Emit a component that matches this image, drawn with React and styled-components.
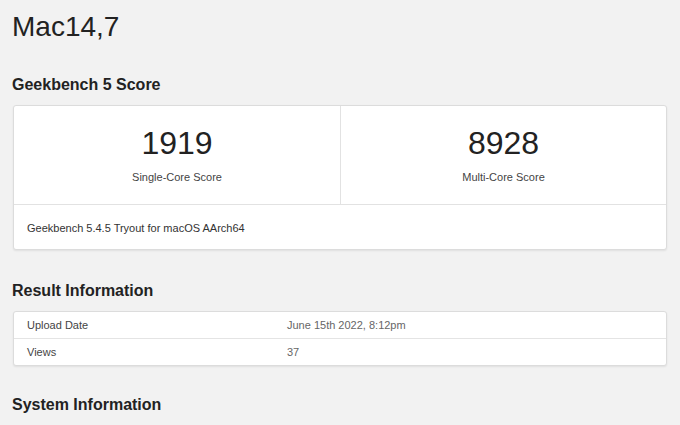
import React from "react";
import styled, { createGlobalStyle } from "styled-components";

const GlobalStyle = createGlobalStyle`
    html, body {
        margin: 0;
        padding: 0;
        background: #f2f2f2;
        font-family: "Liberation Sans", Arial, Helvetica, sans-serif;
        color: #222;
    }
`;

const Page = styled.div`
    padding: 9px 13px 0 13px;
    width: 654px;
`;

const Title = styled.h1`
    margin: 0 0 0 -1px;
    font-size: 28px;
    line-height: 35px;
    font-weight: 400;
    color: #222;
`;

const SectionTitle = styled.h2`
    margin: ${(p) => p.$top}px 0 10px -1px;
    font-size: 16px;
    line-height: 20px;
    font-weight: 700;
    color: #222;
`;

const Card = styled.div`
    background: #fff;
    border: 1px solid #dcdcdc;
    border-radius: 3px;
    box-shadow: 0 1px 2px rgba(0, 0, 0, 0.08);
`;

const ScoreRow = styled.div`
    display: grid;
    grid-template-columns: 1fr 1fr;
    border-bottom: 1px solid #e2e2e2;
`;

const ScoreCell = styled.div`
    display: flex;
    flex-direction: column;
    align-items: center;
    padding: 19px 0 20px;
    & + & {
        border-left: 1px solid #e2e2e2;
    }
`;

const ScoreValue = styled.div`
    font-size: 32px;
    line-height: 36px;
    font-weight: 400;
    color: #222;
`;

const ScoreLabel = styled.div`
    margin-top: 9px;
    font-size: 11px;
    line-height: 14px;
    color: #444;
`;

const CardFooter = styled.div`
    padding: 16px 13px 14px;
    font-size: 11px;
    line-height: 14px;
    color: #333;
`;

const Table = styled.div`
    background: #fff;
    border: 1px solid #dcdcdc;
    border-radius: 3px;
    box-shadow: 0 1px 2px rgba(0, 0, 0, 0.08);
`;

const Row = styled.div`
    display: grid;
    grid-template-columns: 260px 1fr;
    padding: 6px 13px 6px;
    font-size: 11px;
    line-height: 14px;
    & + & {
        border-top: 1px solid #e4e4e4;
    }
`;

const Name = styled.div`
    color: #444;
`;

const Value = styled.div`
    color: #666;
`;

const scores = [
    { value: "1919", label: "Single-Core Score" },
    { value: "8928", label: "Multi-Core Score" },
];

const results = [
    { name: "Upload Date", value: "June 15th 2022, 8:12pm" },
    { name: "Views", value: "37" },
];

export default function App() {
    return (
        <>
            <GlobalStyle />
            <Page>
                <Title>Mac14,7</Title>
                <SectionTitle $top={31}>Geekbench 5 Score</SectionTitle>
                <Card>
                    <ScoreRow>
                        {scores.map((s) => (
                            <ScoreCell key={s.label}>
                                <ScoreValue>{s.value}</ScoreValue>
                                <ScoreLabel>{s.label}</ScoreLabel>
                            </ScoreCell>
                        ))}
                    </ScoreRow>
                    <CardFooter>Geekbench 5.4.5 Tryout for macOS AArch64</CardFooter>
                </Card>
                <SectionTitle $top={31}>Result Information</SectionTitle>
                <Table>
                    {results.map((r) => (
                        <Row key={r.name}>
                            <Name>{r.name}</Name>
                            <Value>{r.value}</Value>
                        </Row>
                    ))}
                </Table>
                <SectionTitle $top={29}>System Information</SectionTitle>
            </Page>
        </>
    );
}
